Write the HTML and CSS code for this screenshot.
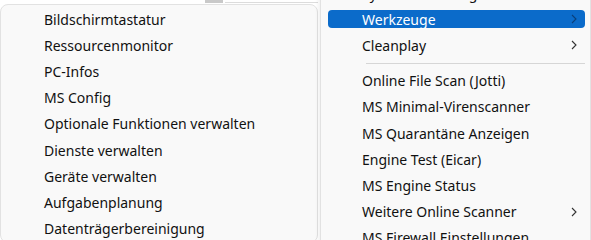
FILE: index.html
```html
<!DOCTYPE html>
<html lang="de">
<head>
<meta charset="utf-8">
<link rel="stylesheet" href="styles.css">
</head>
<body>
<div class="desk">
  <div class="left-col">
    <div class="top-strip">
      <span class="strip-block"></span>
      <span class="strip-line"></span>
    </div>
    <ul class="menu submenu">
      <li class="item">Bildschirmtastatur</li>
      <li class="item">Ressourcenmonitor</li>
      <li class="item">PC-Infos</li>
      <li class="item">MS Config</li>
      <li class="item">Optionale Funktionen verwalten</li>
      <li class="item">Dienste verwalten</li>
      <li class="item">Geräte verwalten</li>
      <li class="item">Aufgabenplanung</li>
      <li class="item">Datenträgerbereinigung</li>
    </ul>
  </div>
  <ul class="menu main">
    <li class="item">Systemsteuerung</li>
    <li class="item active"><span class="label">Werkzeuge</span><svg class="chev" viewBox="0 0 6 10"><path d="M1 1l4 4-4 4"/></svg></li>
    <li class="item"><span class="label">Cleanplay</span><svg class="chev" viewBox="0 0 6 10"><path d="M1 1l4 4-4 4"/></svg></li>
    <li class="sep"></li>
    <li class="item">Online File Scan (Jotti)</li>
    <li class="item">MS Minimal-Virenscanner</li>
    <li class="item">MS Quarantäne Anzeigen</li>
    <li class="item">Engine Test (Eicar)</li>
    <li class="item">MS Engine Status</li>
    <li class="item"><span class="label">Weitere Online Scanner</span><svg class="chev" viewBox="0 0 6 10"><path d="M1 1l4 4-4 4"/></svg></li>
    <li class="item">MS Firewall Einstellungen</li>
  </ul>
</div>
</body>
</html>
```
FILE: styles.css
```css
html, body {
  margin: 0;
  padding: 0;
  background: #ffffff;
}
body {
  font-family: "Noto Sans", "Open Sans", sans-serif;
  font-size: 14px;
  color: #111111;
}
.desk {
  display: flex;
  width: 591px;
  height: 240px;
  overflow: hidden;
}
.left-col {
  width: 318px;
  flex: none;
  display: flex;
  flex-direction: column;
}
.top-strip {
  height: 3px;
  display: flex;
  padding-left: 205px;
  margin-bottom: 1px;
}
.strip-block {
  width: 18px;
  height: 3px;
  background: #c9c9c9;
}
.strip-line {
  flex: 1;
  height: 3px;
  margin-left: 2px;
  border-bottom: 1px solid #dcdcdc;
  box-sizing: border-box;
}
.menu {
  list-style: none;
  margin: 0;
  padding: 0;
  background: #f9f9f9;
  border: 1px solid #e2e2e2;
}
.submenu {
  flex: 1;
  border-radius: 8px;
  padding-top: 1px;
}
.submenu .item {
  padding-left: 43px;
}
.main {
  flex: 1;
  margin-top: -21px;
  margin-left: 2px;
  height: 290px;
  padding: 0 5px 0 7px;
  box-shadow: -2px 0 4px rgba(0, 0, 0, 0.06);
}
.item {
  height: 26.2px;
  display: flex;
  align-items: center;
  white-space: nowrap;
  position: relative;
}
.main .item {
  padding-left: 34px;
  padding-right: 8px;
}
.label {
  flex: 1;
}
.main .item.active {
  color: #ffffff;
}
.main .item.active::before {
  content: "";
  position: absolute;
  left: 0;
  right: 0;
  top: 4px;
  bottom: 4px;
  background: #0b6bca;
  border-radius: 4px;
  z-index: 0;
}
.item .label,
.item .chev {
  position: relative;
  z-index: 1;
}
.chev {
  width: 6px;
  height: 10px;
  fill: none;
  stroke: #333333;
  stroke-width: 1.1;
}
.active .chev {
  stroke: #0a3f7a;
}
.sep {
  height: 9px;
  display: flex;
  align-items: center;
  padding-left: 38px;
}
.sep::after {
  content: "";
  flex: 1;
  height: 1px;
  background: #d6d6d6;
}
```
